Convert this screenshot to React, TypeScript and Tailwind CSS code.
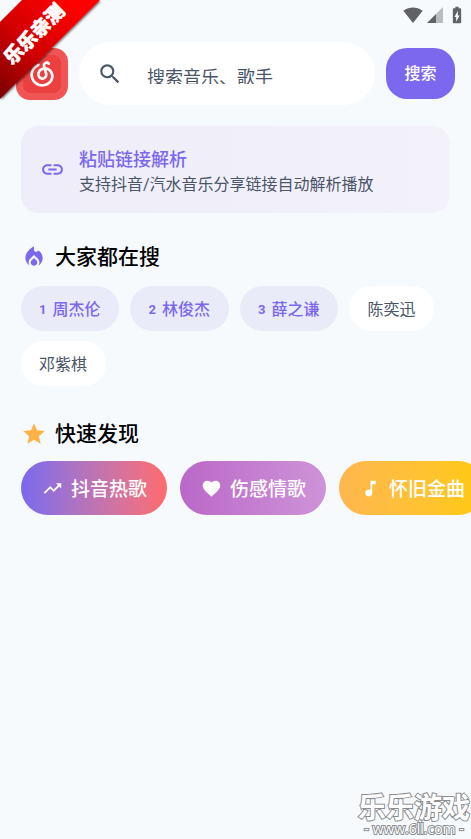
import type { ReactNode } from "react";
import {
  MdBatteryChargingFull,
  MdFavorite,
  MdLink,
  MdLocalFireDepartment,
  MdMusicNote,
  MdSearch,
  MdSignalWifi4Bar,
  MdStar,
  MdTrendingUp,
} from "react-icons/md";
import { RiNeteaseCloudMusicLine } from "react-icons/ri";

const hotSearches = ["周杰伦", "林俊杰", "薛之谦", "陈奕迅", "邓紫棋"];

const playlists = [
  {
    name: "抖音热歌",
    icon: <MdTrendingUp size={21} />,
    color: "from-[#7b68ee] to-[#ff6b6b]",
  },
  {
    name: "伤感情歌",
    icon: <MdFavorite size={21} />,
    color: "from-[#ba68c8] to-[#ce93d8]",
  },
  {
    name: "怀旧金曲",
    icon: <MdMusicNote size={21} />,
    color: "from-[#ffb74d] to-[#ffca00]",
  },
];

function StatusBar() {
  return (
    <div className="flex h-[30px] items-center justify-end pr-1 text-[#606266]">
      <MdSignalWifi4Bar size={20} />
      <svg className="ml-1 h-4 w-4" viewBox="0 0 16 16" fill="currentColor">
        <path d="M9 7l7-7v16H9z" opacity="0.4" />
        <path d="M0 16 9 7v9z" />
      </svg>
      <MdBatteryChargingFull className="ml-1" size={20} />
    </div>
  );
}

function Ribbon() {
  return (
    <svg
      className="absolute left-0 top-0 h-[104px] w-[104px]"
      viewBox="0 0 104 104"
      aria-label="乐乐亲测"
    >
      <defs>
        <linearGradient id="ribbon" gradientUnits="userSpaceOnUse" x1="0" y1="100" x2="85" y2="15">
          <stop offset="0" stopColor="#780000" />
          <stop offset="0.5" stopColor="#d40000" />
          <stop offset="1" stopColor="#ff0505" />
        </linearGradient>
        <filter id="ribbonShadow">
          <feDropShadow dx="1" dy="1" stdDeviation="1" floodOpacity="0.6" />
        </filter>
      </defs>
      <path d="M22 0H100L0 99V22z" fill="url(#ribbon)" filter="url(#ribbonShadow)" />
      <text
        x="34"
        y="41"
        transform="rotate(-45 34 34)"
        textAnchor="middle"
        fontSize="19"
        fontWeight="900"
        fill="#fff"
        stroke="#fff"
        strokeWidth="0.6"
      >
        乐乐亲测
      </text>
    </svg>
  );
}

function SectionTitle({ icon, children }: { icon: ReactNode; children: ReactNode }) {
  return (
    <h2 className="flex items-center gap-2 text-[21px] leading-8 font-medium text-black">
      {icon}
      {children}
    </h2>
  );
}

function Watermark() {
  return (
    <div className="absolute right-0 bottom-0 flex flex-col items-center pr-px text-white [-webkit-text-stroke:2px_#8a8d90] [paint-order:stroke_fill]">
      <span className="text-[28px] leading-5 font-bold">乐乐游戏</span>
      <span className="font-['Open_Sans',sans-serif] text-sm leading-5 font-medium">
        - www.6ll.com -
      </span>
    </div>
  );
}

export default function App() {
  return (
    <div className="relative min-h-screen overflow-hidden bg-[#f6fafd] font-[Roboto,'Noto_Sans_CJK_SC',sans-serif]">
      <StatusBar />

      <header className="flex items-center px-4 pt-3">
        <div className="flex h-[52px] w-[52px] shrink-0 items-center justify-center rounded-[14px] bg-[#f05454]">
          <div className="flex h-[38px] w-[38px] items-center justify-center rounded-lg bg-[#eb4040] text-white">
            <RiNeteaseCloudMusicLine size={32} />
          </div>
        </div>
        <label className="ml-[11px] flex h-[63px] min-w-0 flex-1 items-center rounded-full bg-white pr-5 pl-[18px]">
          <MdSearch className="shrink-0 text-[#4a5568]" size={26} />
          <div className="ml-6 h-[21px] min-w-0 flex-1 overflow-hidden">
            <input
              type="text"
              placeholder="搜索音乐、歌手"
              aria-label="搜索音乐、歌手"
              className="block h-[30px] w-full text-lg leading-[30px] outline-none placeholder:text-[#4a5568]"
            />
          </div>
        </label>
        <button className="ml-[11px] h-[51px] w-[69px] shrink-0 rounded-[21px] bg-[#7b68ee] text-base font-medium text-white">
          搜索
        </button>
      </header>

      <main className="pt-[21px] pl-[21px]">
        <button className="flex w-full pr-[21px] text-left">
          <span className="flex h-[87px] flex-1 items-center gap-3.5 rounded-[18px] bg-linear-to-r from-[#eeedf9] to-[#f3f1fa] px-[19px]">
            <MdLink className="shrink-0 text-[#7b68ee]" size={25} />
            <span className="flex flex-col pt-1">
              <span className="text-lg leading-[26px] font-medium text-[#7b68ee]">粘贴链接解析</span>
              <span className="text-base leading-6 text-[#4a5568]">
                支持抖音/汽水音乐分享链接自动解析播放
              </span>
            </span>
          </span>
        </button>

        <section className="mt-7">
          <SectionTitle icon={<MdLocalFireDepartment className="text-[#7b68ee]" size={26} />}>
            大家都在搜
          </SectionTitle>
          <div className="mt-[13px] flex flex-wrap gap-x-[11px] gap-y-2.5 pr-[21px]">
            {hotSearches.map((name, i) =>
              i < 3 ? (
                <button
                  key={name}
                  className="flex h-[45px] items-center gap-1.5 rounded-full bg-[#eaebf9] pt-0.5 pr-[19px] pl-[18px] text-base font-medium text-[#7b68ee]"
                >
                  <span className="text-[13px] font-bold">{i + 1}</span>
                  {name}
                </button>
              ) : (
                <button
                  key={name}
                  className="h-[45px] rounded-full bg-white pt-0.5 pr-[19px] pl-[18px] text-base text-[#4a5568]"
                >
                  {name}
                </button>
              ),
            )}
          </div>
        </section>

        <section className="mt-8">
          <SectionTitle icon={<MdStar className="text-[#ffb347]" size={26} />}>快速发现</SectionTitle>
          <div className="mt-[11px] flex gap-[13px] overflow-hidden">
            {playlists.map((item) => (
              <button
                key={item.name}
                className={`flex h-[54px] shrink-0 items-center gap-2 rounded-full bg-linear-to-r pr-5 pl-[21px] text-[19px] font-medium text-white ${item.color}`}
              >
                {item.icon}
                <span className="pt-1">{item.name}</span>
              </button>
            ))}
          </div>
        </section>
      </main>

      <Ribbon />
      <Watermark />
    </div>
  );
}
